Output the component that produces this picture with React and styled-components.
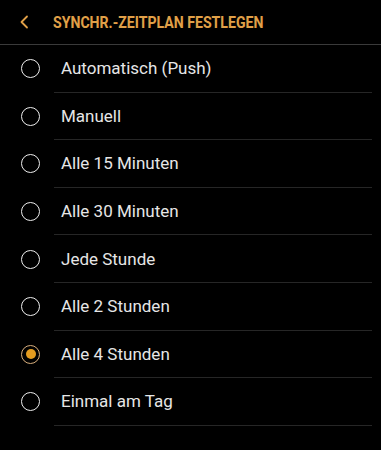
import React, { useState } from "react";
import styled, { createGlobalStyle } from "styled-components";

const GlobalStyle = createGlobalStyle`
  html, body {
    margin: 0;
    padding: 0;
    background: #000;
  }
  body {
    font-family: Roboto, "Noto Sans", sans-serif;
    color: #f2f2f2;
  }
`;

const options = [
  "Automatisch (Push)",
  "Manuell",
  "Alle 15 Minuten",
  "Alle 30 Minuten",
  "Jede Stunde",
  "Alle 2 Stunden",
  "Alle 4 Stunden",
  "Einmal am Tag",
];

export default function App() {
  const [selected, setSelected] = useState(6);
  return (
    <Page>
      <GlobalStyle />
      <Header>
        <BackButton aria-label="Zurück">
          <svg width="10" height="14" viewBox="0 0 10 14">
            <path
              d="M8 1.5 L2.5 7 L8 12.5"
              fill="none"
              stroke="#e0a048"
              strokeWidth="1.8"
              strokeLinecap="round"
              strokeLinejoin="round"
            />
          </svg>
        </BackButton>
        <Title>SYNCHR.-ZEITPLAN FESTLEGEN</Title>
      </Header>
      <List>
        {options.map((label, i) => (
          <Row key={label} onClick={() => setSelected(i)}>
            <Radio $checked={selected === i} />
            <Label>{label}</Label>
          </Row>
        ))}
      </List>
    </Page>
  );
}

const Page = styled.div`
  width: 381px;
  min-height: 450px;
  background: #000;
`;

const Header = styled.div`
  display: flex;
  align-items: center;
  height: 45px;
  padding-bottom: 1px;
  border-bottom: 1px solid #3a3a3a;
  box-sizing: border-box;
`;

const BackButton = styled.div`
  display: flex;
  align-items: center;
  justify-content: center;
  width: 14px;
  margin-left: 17px;
  margin-right: 22px;
  margin-top: 1px;
`;

const Title = styled.div`
  font-family: Roboto, sans-serif;
  font-weight: 700;
  font-size: 17px;
  color: #e0a048;
  white-space: nowrap;
  transform: scaleX(0.83);
  transform-origin: left center;
  margin-top: 1px;
`;

const List = styled.div`
  display: flex;
  flex-direction: column;
`;

const Row = styled.div`
  display: flex;
  align-items: center;
  height: 47.6px;
  padding-left: 21px;
  cursor: pointer;
`;

const Radio = styled.span`
  flex: none;
  box-sizing: border-box;
  width: 19px;
  height: 19px;
  border-radius: 50%;
  border: 1.6px solid ${(p) => (p.$checked ? "#d8ae7c" : "#eeeeee")};
  display: flex;
  align-items: center;
  justify-content: center;
  &::after {
    content: "";
    display: ${(p) => (p.$checked ? "block" : "none")};
    width: 10px;
    height: 10px;
    border-radius: 50%;
    background: #e39b1f;
  }
`;

const Label = styled.div`
  flex: 1;
  align-self: stretch;
  display: flex;
  align-items: center;
  margin-left: 14px;
  margin-right: 9px;
  border-bottom: 1px solid #262626;
  font-weight: 400;
  font-size: 17px;
  color: #e6e6e6;
  padding-left: 7px;
`;
